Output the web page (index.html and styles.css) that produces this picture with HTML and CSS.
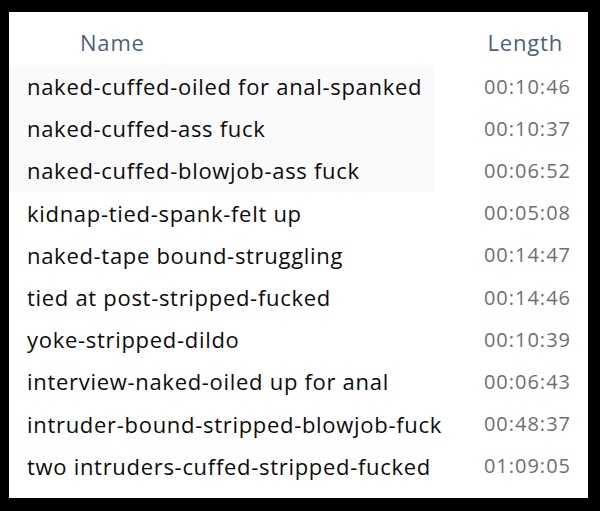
FILE: index.html
```html
<!DOCTYPE html>
<html>
<head>
<meta charset="utf-8">
<link rel="stylesheet" href="styles.css">
</head>
<body>
<div class="panel">
  <div class="head">
    <span class="h-name">Name</span>
    <span class="h-len">Length</span>
  </div>
  <div class="rows">
    <div class="row shade"><span class="name">naked-cuffed-oiled for anal-spanked</span><span class="len">00:10:46</span></div>
    <div class="row shade"><span class="name">naked-cuffed-ass fuck</span><span class="len">00:10:37</span></div>
    <div class="row shade"><span class="name">naked-cuffed-blowjob-ass fuck</span><span class="len">00:06:52</span></div>
    <div class="row"><span class="name">kidnap-tied-spank-felt up</span><span class="len">00:05:08</span></div>
    <div class="row"><span class="name">naked-tape bound-struggling</span><span class="len">00:14:47</span></div>
    <div class="row"><span class="name">tied at post-stripped-fucked</span><span class="len">00:14:46</span></div>
    <div class="row"><span class="name">yoke-stripped-dildo</span><span class="len">00:10:39</span></div>
    <div class="row"><span class="name">interview-naked-oiled up for anal</span><span class="len">00:06:43</span></div>
    <div class="row"><span class="name">intruder-bound-stripped-blowjob-fuck</span><span class="len">00:48:37</span></div>
    <div class="row"><span class="name">two intruders-cuffed-stripped-fucked</span><span class="len">01:09:05</span></div>
  </div>
</div>
</body>
</html>
```
FILE: styles.css
```css
html, body {
  margin: 0;
  padding: 0;
  background: #000;
}
body {
  width: 600px;
  height: 511px;
  padding: 12px 12px 13px 9px;
  box-sizing: border-box;
  font-family: "Open Sans", "Noto Sans", sans-serif;
}
.panel {
  background: #fff;
  width: 579px;
  height: 486px;
  box-sizing: border-box;
  padding: 16px 0 0 0;
}
.head {
  display: flex;
  justify-content: space-between;
  height: 28px;
  font-size: 22px;
  line-height: 28px;
  letter-spacing: 0.8px;
  color: #4d5f7c;
}
.h-name { margin-left: 71px; }
.h-len { margin-right: 25px; }
.rows {
  margin-top: 9px;
  display: flex;
  flex-direction: column;
}
.row {
  display: flex;
  justify-content: space-between;
  align-items: center;
  height: 42.2px;
  padding: 0 17px 0 18px;
  font-size: 22px;
}
.row.shade {
  background: linear-gradient(to right, #fafafa 0, #fafafa 426px, #fff 426px);
}
.name { color: #0c0c0c; letter-spacing: 0.7px; }
.len { color: #6f6f6f; font-size: 20px; letter-spacing: 1px; }
```
